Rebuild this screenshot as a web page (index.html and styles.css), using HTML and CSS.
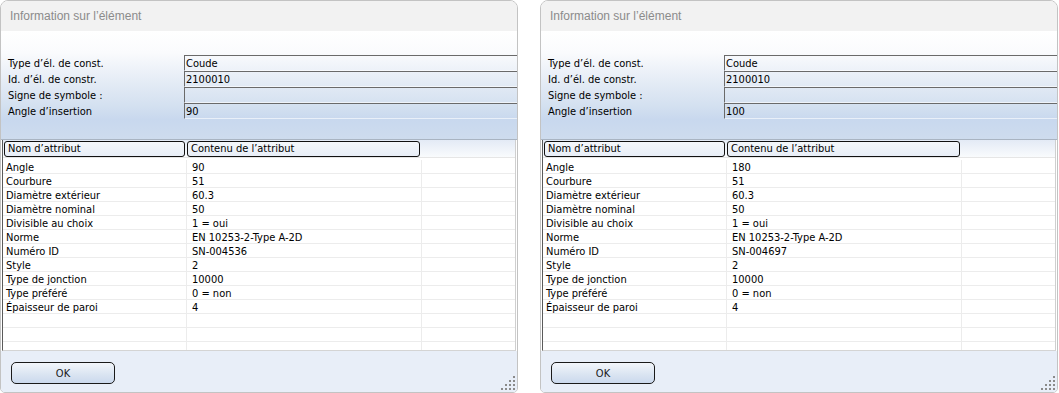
FILE: index.html
```html
<!DOCTYPE html>
<html lang="fr">
<head>
    <meta charset="UTF-8">
    <title>Information sur l'élément</title>
    <link rel="stylesheet" href="styles.css">
</head>
<body>
    <div class="desktop">
        <section class="dialog">
            <header class="dialog-title">Information sur l’élément</header>
            <div class="info">
                <span class="info-label">Type d’él. de const.</span><span class="info-field">Coude</span>
                <span class="info-label">Id. d’él. de constr.</span><span class="info-field">2100010</span>
                <span class="info-label">Signe de symbole :</span><span class="info-field"></span>
                <span class="info-label">Angle d’insertion</span><span class="info-field">90</span>
            </div>
            <div class="attrs">
                <div class="attrs-head">
                    <div class="cell"><span class="head-btn">Nom d’attribut</span></div>
                    <div class="cell"><span class="head-btn">Contenu de l’attribut</span></div>
                    <div class="cell"></div>
                </div>
                <div class="attrs-body">
                    <div class="row"><span>Angle</span><span>90</span><span></span></div>
                    <div class="row"><span>Courbure</span><span>51</span><span></span></div>
                    <div class="row"><span>Diamètre extérieur</span><span>60.3</span><span></span></div>
                    <div class="row"><span>Diamètre nominal</span><span>50</span><span></span></div>
                    <div class="row"><span>Divisible au choix</span><span>1 = oui</span><span></span></div>
                    <div class="row"><span>Norme</span><span>EN 10253-2-Type A-2D</span><span></span></div>
                    <div class="row"><span>Numéro ID</span><span>SN-004536</span><span></span></div>
                    <div class="row"><span>Style</span><span>2</span><span></span></div>
                    <div class="row"><span>Type de jonction</span><span>10000</span><span></span></div>
                    <div class="row"><span>Type préféré</span><span>0 = non</span><span></span></div>
                    <div class="row"><span>Épaisseur de paroi</span><span>4</span><span></span></div>
                    <div class="row"><span></span><span></span><span></span></div>
                    <div class="row"><span></span><span></span><span></span></div>
                    <div class="row"><span></span><span></span><span></span></div>
                </div>
            </div>
            <footer class="dialog-foot">
                <button class="ok-button">OK</button>
                <svg class="grip" width="14" height="14" viewBox="0 0 14 14">
                    <rect x="12" y="0" width="2" height="2"/>
                    <rect x="8" y="4" width="2" height="2"/><rect x="12" y="4" width="2" height="2"/>
                    <rect x="4" y="8" width="2" height="2"/><rect x="8" y="8" width="2" height="2"/><rect x="12" y="8" width="2" height="2"/>
                    <rect x="0" y="12" width="2" height="2"/><rect x="4" y="12" width="2" height="2"/><rect x="8" y="12" width="2" height="2"/><rect x="12" y="12" width="2" height="2"/>
                </svg>
            </footer>
        </section>

        <section class="dialog">
            <header class="dialog-title">Information sur l’élément</header>
            <div class="info">
                <span class="info-label">Type d’él. de const.</span><span class="info-field">Coude</span>
                <span class="info-label">Id. d’él. de constr.</span><span class="info-field">2100010</span>
                <span class="info-label">Signe de symbole :</span><span class="info-field"></span>
                <span class="info-label">Angle d’insertion</span><span class="info-field">100</span>
            </div>
            <div class="attrs">
                <div class="attrs-head">
                    <div class="cell"><span class="head-btn">Nom d’attribut</span></div>
                    <div class="cell"><span class="head-btn">Contenu de l’attribut</span></div>
                    <div class="cell"></div>
                </div>
                <div class="attrs-body">
                    <div class="row"><span>Angle</span><span>180</span><span></span></div>
                    <div class="row"><span>Courbure</span><span>51</span><span></span></div>
                    <div class="row"><span>Diamètre extérieur</span><span>60.3</span><span></span></div>
                    <div class="row"><span>Diamètre nominal</span><span>50</span><span></span></div>
                    <div class="row"><span>Divisible au choix</span><span>1 = oui</span><span></span></div>
                    <div class="row"><span>Norme</span><span>EN 10253-2-Type A-2D</span><span></span></div>
                    <div class="row"><span>Numéro ID</span><span>SN-004697</span><span></span></div>
                    <div class="row"><span>Style</span><span>2</span><span></span></div>
                    <div class="row"><span>Type de jonction</span><span>10000</span><span></span></div>
                    <div class="row"><span>Type préféré</span><span>0 = non</span><span></span></div>
                    <div class="row"><span>Épaisseur de paroi</span><span>4</span><span></span></div>
                    <div class="row"><span></span><span></span><span></span></div>
                    <div class="row"><span></span><span></span><span></span></div>
                    <div class="row"><span></span><span></span><span></span></div>
                </div>
            </div>
            <footer class="dialog-foot">
                <button class="ok-button">OK</button>
                <svg class="grip" width="14" height="14" viewBox="0 0 14 14">
                    <rect x="12" y="0" width="2" height="2"/>
                    <rect x="8" y="4" width="2" height="2"/><rect x="12" y="4" width="2" height="2"/>
                    <rect x="4" y="8" width="2" height="2"/><rect x="8" y="8" width="2" height="2"/><rect x="12" y="8" width="2" height="2"/>
                    <rect x="0" y="12" width="2" height="2"/><rect x="4" y="12" width="2" height="2"/><rect x="8" y="12" width="2" height="2"/><rect x="12" y="12" width="2" height="2"/>
                </svg>
            </footer>
        </section>
    </div>
</body>
</html>
```

FILE: styles.css
```css
body {
    margin: 0;
    background: #fff;
    font-family: 'DejaVu Sans Condensed', 'Liberation Sans', Arial, sans-serif;
    font-size: 11px;
    color: #000;
}

.desktop {
    display: flex;
    gap: 22px;
    height: 393px;
}

.dialog {
    position: relative;
    display: flex;
    flex-direction: column;
    width: 518px;
    height: 393px;
    box-sizing: border-box;
    border: 1px solid #c3c3c3;
    border-radius: 8px 8px 5px 5px;
    overflow: hidden;
}

.dialog-title {
    height: 30px;
    line-height: 31px;
    padding-left: 9px;
    background: #f2f2f2;
    color: #8b8b8b;
    font-family: 'Liberation Sans', Arial, sans-serif;
    font-size: 12px;
}

.info {
    display: grid;
    grid-template-columns: 176px 1fr;
    grid-auto-rows: 16px;
    align-content: start;
    height: 109px;
    box-sizing: border-box;
    padding: 24px 0 0 7px;
    border-bottom: 1px solid #a9b4c2;
    background: linear-gradient(#ffffff 0%, #fafbfd 20%, #e6edf6 45%, #d3e0f0 70%, #c8d8ee 82%, #cedcee 100%);
}

.info-label {
    line-height: 17px;
}

.info-field {
    box-sizing: border-box;
    border-top: 1px solid #6a6a6a;
    border-left: 1px solid #6a6a6a;
    border-bottom: 1px solid rgba(255, 255, 255, 0.6);
    padding-left: 1px;
    line-height: 15px;
}

.attrs {
    display: flex;
    flex-direction: column;
    height: 211px;
    box-sizing: border-box;
    margin: 0 1px 0 1px;
    border-left: 1px solid #5a5a5a;
    border-right: 1px solid #cfcfcf;
    border-bottom: 1px solid #d4d4d4;
    overflow: hidden;
}

.attrs-head {
    display: grid;
    grid-template-columns: 184px 235px 1fr;
    height: 19px;
    box-sizing: border-box;
    border-bottom: 1px solid #e6e6e6;
    background: linear-gradient(#e3eaf5, #f9fbfd);
}

.attrs-head .cell {
    padding-top: 1px;
}

.head-btn {
    display: block;
    height: 16px;
    box-sizing: border-box;
    margin-right: 2px;
    padding-left: 3px;
    border: 1px solid #111;
    border-radius: 3px;
    line-height: 14px;
    background: linear-gradient(#f4f7fb, #e8eef7);
}

.attrs-head .cell:first-child .head-btn {
    margin-left: 1px;
}

.attrs-body {
    padding-top: 2px;
}

.row {
    display: grid;
    grid-template-columns: 184px 235px 1fr;
    height: 14px;
    box-sizing: border-box;
    border-bottom: 1px solid #ececec;
    line-height: 15px;
}

.row span {
    border-right: 1px solid #ececec;
    padding-left: 3px;
    white-space: nowrap;
}

.row span:nth-child(2) {
    padding-left: 5px;
}

.row span:last-child {
    border-right: none;
}

.dialog-foot {
    flex: 1;
    padding: 11px 0 0 10px;
    background: #e8eef8;
}

.ok-button {
    width: 104px;
    height: 22px;
    border: 1px solid #1a1a1a;
    border-radius: 5px;
    background: linear-gradient(#f3f6fb, #dbe5f2 55%, #cbd9ed);
    font-family: 'DejaVu Sans Condensed', 'Liberation Sans', Arial, sans-serif;
    font-size: 11px;
    color: #1a1a1a;
    padding: 0;
}

.grip {
    position: absolute;
    right: 2px;
    bottom: 2px;
    fill: #8a8a8a;
}
```
